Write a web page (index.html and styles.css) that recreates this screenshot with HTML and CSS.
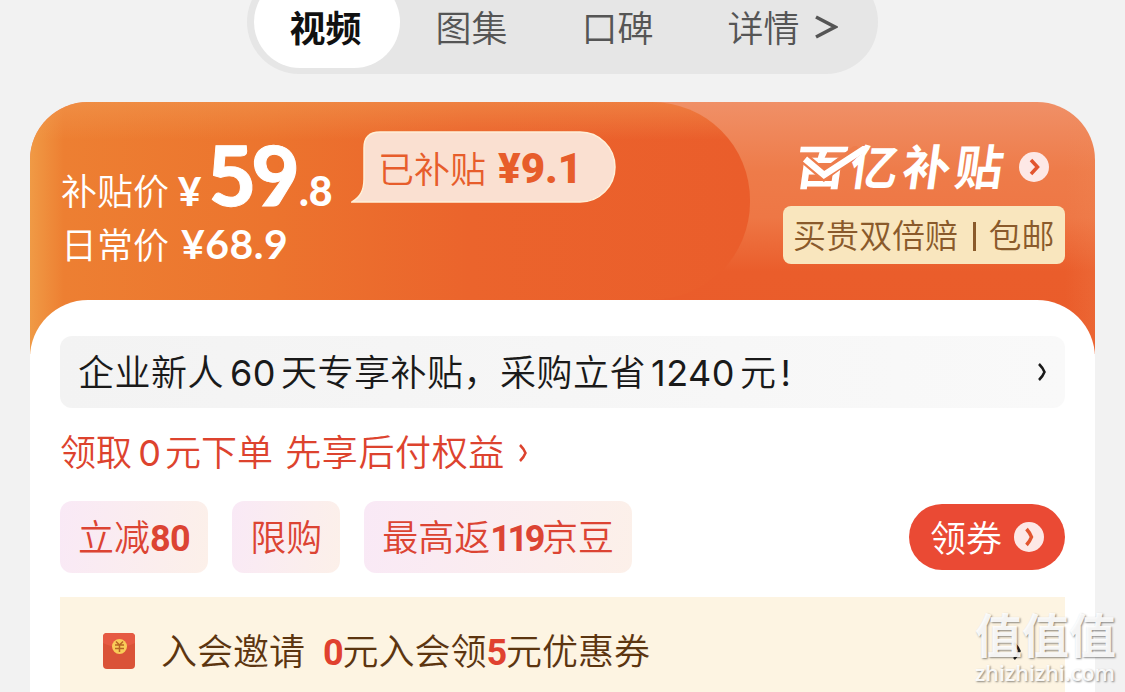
FILE: index.html
```html
<!DOCTYPE html>
<html lang="zh-CN">
<head>
  <meta charset="UTF-8" />
  <meta name="viewport" content="width=device-width, initial-scale=1" />
  <title>商品详情</title>
  <link rel="stylesheet" href="styles.css">
</head>
<body>
  <nav class="tabs">
    <span class="tab active">视频</span>
    <span class="tab">图集</span>
    <span class="tab">口碑</span>
    <span class="tab">详情</span>
    <svg class="tab-arrow" viewBox="0 0 24 26"><path d="M2 3 L21 13 L2 23" /></svg>
  </nav>

  <main class="card">
    <header class="banner">
      <div class="banner-left">
        <div class="prices">
          <div class="price-row">
            <span class="label">补贴价</span>
            <span class="yen">¥</span><span class="big">59</span><span class="dec">.8</span>
          </div>
          <div class="price-row daily">
            <span class="label">日常价</span>
            <span class="old">¥68.9</span>
          </div>
        </div>
        <div class="bubble">
          <svg class="bubble-bg" viewBox="0 0 266 72">
            <path d="M1 71 C9 66 13 60 13 48 V17 Q13 1 29 1 H229 A35 35 0 0 1 229 71 Z" />
          </svg>
          <span class="bubble-label">已补贴</span>
          <span class="bubble-num">¥9.1</span>
        </div>
      </div>

      <div class="banner-right">
        <div class="brand">
          <span class="brand-text"><span class="bai">百</span>亿补贴</span>
          <svg class="brand-check" viewBox="0 0 74 44">
            <path class="check-gap" d="M3 12 L23 29 L58 3" />
            <path class="check" d="M4 13 L23 29 L66 1" />
          </svg>
          <svg class="round-arrow" viewBox="0 0 30 30">
            <circle cx="15" cy="15" r="15" />
            <path d="M12 8 L18.500 15 L12 22" />
          </svg>
        </div>
        <div class="promise">买贵双倍赔<i></i>包邮</div>
      </div>
    </header>

    <section class="panel">
      <div class="notice">
        <span>企业新人<b class="n60">60</b>天专享补贴，采购立省<b class="n1240">1240</b>元<b class="bang">!</b></span>
        <svg class="chev" viewBox="0 0 10 20"><path d="M2 2 Q6 6 7.500 10 Q6 14 2 18" /></svg>
      </div>

      <div class="benefit">
        <span>领取<b class="n0">0</b>元下单</span>
        <span class="later">先享后付权益</span>
        <svg class="chev" viewBox="0 0 10 20"><path d="M2 2 Q6 6 7.500 10 Q6 14 2 18" /></svg>
      </div>

      <div class="coupons">
        <span class="tag">立减<b>80</b></span>
        <span class="tag">限购</span>
        <span class="tag">最高返<b class="n119">119</b>京豆</span>
        <div class="get">
          <span>领券</span>
          <svg class="round-arrow" viewBox="0 0 30 30">
            <circle cx="15" cy="15" r="15" />
            <path d="M12.500 7 Q16 11 17.500 15 Q16 19 12.500 23" />
          </svg>
        </div>
      </div>

      <div class="member">
        <svg class="packet" viewBox="0 0 32 36">
          <rect width="32" height="36" rx="4" fill="#da5338" />
          <path d="M0 10 V4 Q0 0 4 0 H28 Q32 0 32 4 V10 Q16 18 0 10Z" fill="#e65a43" />
          <circle cx="16.500" cy="13.500" r="7.500" fill="#f9cc58" />
          <path d="M13 8.500 L16.500 12 L20 8.500 M12 12 H21 M12 15.500 H21 M16.500 12 V19" fill="none" stroke="#b96525" stroke-width="1.500" />
        </svg>
        <span class="invite">入会邀请</span>
        <span class="offer"><b>0</b>元入会领<b>5</b>元优惠券</span>
        <svg class="chev" viewBox="0 0 10 20"><path d="M2 2 Q6 6 7.500 10 Q6 14 2 18" /></svg>
      </div>
    </section>
  </main>

  <div class="watermark">
    <div class="wm-name">值值值</div>
    <div class="wm-site">zhizhizhi.com</div>
  </div>
</body>
</html>
```

FILE: styles.css
```css
* {
  box-sizing: border-box;
}

body {
  display: flex;
  flex-direction: column;
  position: relative;
  margin: 0;
  width: 1125px;
  height: 692px;
  overflow: hidden;
  background: #f2f2f2;
  font-family: "Noto Sans CJK SC", sans-serif;
  font-size: 36px;
  font-weight: 350;
  line-height: 52px;
  color: #1a1a1a;
  white-space: nowrap;
}

svg {
  display: block;
  flex: none;
}

.tabs {
  display: flex;
  flex: none;
  width: 631px;
  height: 104px;
  margin: -30px 0 0 247px;
  padding: 6px 0 0 7px;
  background: #e6e6e6;
  border-radius: 52px;
}

.tab {
  width: 146px;
  height: 92px;
  padding: 24px 3px 0 0;
  text-align: center;
  color: #555;
}

.tab.active {
  background: #fff;
  border-radius: 46px;
  color: #111;
  font-weight: 700;
}

.tab-arrow {
  width: 24px;
  height: 26px;
  margin: 38px 0 0 -24px;
}

.tab-arrow path {
  fill: none;
  stroke: #555;
  stroke-width: 3.5;
}

.card {
  flex: none;
  width: 1065px;
  margin: 28px 0 0 30px;
}

.banner {
  display: flex;
  height: 252px;
  border-radius: 58px 58px 0 0;
  overflow: hidden;
  background:
    linear-gradient(to right, #f09a45 0, #ed7f32 34px, #ec742e 240px) 0 198px / 240px 54px no-repeat,
    linear-gradient(to left, rgba(240, 140, 90, 0.2), rgba(240, 140, 90, 0) 30px),
    linear-gradient(to bottom, #f09067 0, #ee7b49 70px, #ee7745 115px, #ea5d2b 170px, #ea5c2a 252px);
}

.banner-left {
  display: flex;
  width: 720px;
  height: 198px;
  padding-left: 31px;
  border-radius: 0 98px 98px 0;
  background:
    linear-gradient(to bottom, rgba(242, 156, 85, 0.5), rgba(242, 156, 85, 0) 38px),
    linear-gradient(to right, #f09a45 0, #ed7f32 34px, #ec742e 240px, #eb642c 440px, #ea5d2b 720px);
}

.prices {
  width: 290px;
  padding-top: 31px;
  color: #fff;
}

.price-row {
  display: flex;
  align-items: baseline;
  height: 85px;
  line-height: 82px;
  font-family: Lato, sans-serif;
}

.price-row.daily {
  height: 52px;
  line-height: 52px;
}

.label {
  position: relative;
  top: -1px;
  width: 117px;
  font-family: "Noto Sans CJK SC", sans-serif;
}

.yen {
  width: 29px;
  font-size: 40px;
  font-weight: 900;
}

.big {
  width: 92px;
  font-size: 83px;
  font-weight: 900;
  letter-spacing: -3px;
  transform: skewX(5deg);
  -webkit-text-stroke: 1px #fff;
}

.dec {
  font-size: 41px;
  font-weight: 900;
}

.old {
  position: relative;
  top: -1px;
  padding-left: 3px;
  font-size: 41px;
  font-weight: 700;
  letter-spacing: 0.5px;
}

.bubble {
  display: flex;
  position: relative;
  width: 266px;
  height: 72px;
  margin-top: 29px;
  padding-left: 27px;
  line-height: 72px;
  color: #e75d2b;
}

.bubble-bg {
  position: absolute;
  left: 0;
  top: 0;
  width: 266px;
  height: 72px;
}

.bubble-bg path {
  fill: #fae0d1;
  stroke: #fff0d8;
  stroke-width: 1.5;
}

.bubble-label,
.bubble-num {
  position: relative;
}

.bubble-label {
  width: 120px;
}

.bubble-num {
  font: 900 42px/76px Roboto, sans-serif;
}

.banner-right {
  width: 315px;
  padding: 40px 0 0 33px;
}

.brand {
  display: flex;
  position: relative;
  align-items: center;
  height: 50px;
  padding-left: 15px;
}

.brand-text {
  width: 221px;
  font-size: 48px;
  font-weight: 700;
  line-height: 44px;
  padding-bottom: 6px;
  letter-spacing: 4.5px;
  color: #fff;
  transform: skewX(-8deg);
}

.bai {
  display: inline-block;
  transform: scaleX(1.12);
}

.brand-check {
  position: absolute;
  left: 18px;
  top: 4px;
  width: 74px;
  height: 44px;
}

.brand-check path {
  fill: none;
}

.check-gap {
  stroke: #ee7d4c;
  stroke-width: 11;
}

.check {
  stroke: #fff;
  stroke-width: 6.5;
}

.round-arrow {
  width: 30px;
  height: 30px;
}

.round-arrow circle {
  fill: #fde8e6;
}

.round-arrow path {
  fill: none;
  stroke: #e2552f;
  stroke-width: 3.5;
}

.promise {
  display: flex;
  align-items: center;
  width: 282px;
  height: 58px;
  margin-top: 14px;
  padding: 0 0 2px 10px;
  border-radius: 8px;
  background: #f9e6be;
  color: #8a5a2b;
  font-size: 33px;
  line-height: 54px;
}

.promise i {
  width: 2.5px;
  height: 29px;
  margin: 4px 13px 0 15px;
  background: #8a5a2b;
}

.panel {
  position: relative;
  height: 392px;
  margin-top: -54px;
  padding: 36px 30px 0;
  background: #fff;
  border-radius: 58px 58px 0 0;
}

.chev {
  width: 10px;
  height: 20px;
}

.chev path {
  fill: none;
  stroke: currentColor;
  stroke-width: 2.5;
}

.notice {
  display: flex;
  align-items: center;
  justify-content: space-between;
  height: 72px;
  padding: 0 18px;
  background: linear-gradient(to right, #f3f3f3, #f9f9f9);
  border-radius: 12px;
  letter-spacing: 0.5px;
}

.notice span {
  padding-bottom: 2px;
}

.notice b,
.benefit b {
  font-family: Inter, sans-serif;
  font-weight: 400;
}

.notice .n60 {
  margin: 0 5px 0 6px;
}

.notice .n1240 {
  margin: 0 5px;
}

.notice .bang {
  margin-left: 4px;
}

.benefit {
  display: flex;
  align-items: center;
  height: 54px;
  margin-top: 18px;
  gap: 13px;
  color: #dd432e;
}

.benefit span {
  padding-bottom: 3px;
  letter-spacing: 0.1px;
}

.benefit .later {
  margin-left: -1px;
  padding-bottom: 6px;
  letter-spacing: 0.6px;
}

.benefit .n0 {
  margin: 0 5px 0 6px;
  letter-spacing: -1px;
}

.coupons {
  display: flex;
  align-items: center;
  height: 72px;
  margin-top: 21px;
  gap: 24px;
}

.tag {
  height: 72px;
  padding: 0 18px;
  line-height: 69px;
  border-radius: 12px;
  background: linear-gradient(100deg, #f9e9f6, #fcf0e9);
  color: #dc4433;
}

.tag b,
.offer b {
  font-family: Roboto, sans-serif;
  font-weight: 700;
  letter-spacing: -0.6px;
}

.tag .n119 {
  letter-spacing: -3.4px;
}

.get {
  display: flex;
  align-items: center;
  gap: 12px;
  width: 156px;
  height: 66px;
  margin-left: auto;
  padding-left: 21px;
  border-radius: 33px;
  background: #ea4a34;
  color: #fff;
}

.get span {
  padding-bottom: 3px;
}

.member {
  display: flex;
  align-items: center;
  height: 112px;
  margin-top: 24px;
  padding: 0 43px 4px;
  background: #fdf4e2;
  color: #5c3510;
}

.packet {
  width: 32px;
  height: 36px;
  margin-right: 26px;
}

.invite {
  width: 162px;
  padding-bottom: 4px;
}

.offer b {
  letter-spacing: -1.2px;
  color: #e0412f;
}

.member .chev {
  margin-left: auto;
  color: #222;
}

.watermark {
  position: absolute;
  left: 975px;
  top: 606px;
  color: rgba(255, 255, 255, 0.92);
  text-shadow: 1px 1px 2px rgba(0, 0, 0, 0.45);
}

.wm-name {
  font-size: 47px;
  font-weight: 700;
  line-height: 54px;
}

.wm-site {
  font: 600 21.5px/26px "Open Sans", sans-serif;
}
```
